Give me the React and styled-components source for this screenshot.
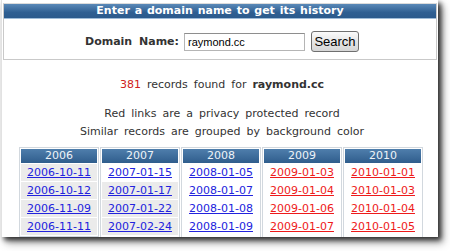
import React from "react";
import styled, { createGlobalStyle } from "styled-components";

const GlobalStyle = createGlobalStyle`
  html, body { margin: 0; padding: 0; background: #ffffff; }
  body { font-family: "DejaVu Sans", Verdana, sans-serif; font-size: 11px; color: #333; }
`;

const Frame = styled.div`
  width: 450px;
  height: 251px;
  overflow: hidden;
  background: #fff;
`;

const Page = styled.div`
  box-sizing: border-box;
  margin-left: 1px;
  width: 437px;
  height: 237px;
  padding: 3px 1px 0 1px;
  border-left: 1px solid #e2e2e2;
  background: #fff;
  overflow: hidden;
  box-shadow: 3px 3px 5px rgba(0, 0, 0, 0.75), 5px 6px 8px rgba(0, 0, 0, 0.35);
  display: flex;
  flex-direction: column;
  align-items: stretch;
`;

const FormBox = styled.div`
  border: 1px solid #c9c9c9;
  border-top-color: #dcdcdc;
`;

const FormHeader = styled.div`
  height: 14px;
  line-height: 14px;
  text-align: center;
  color: #fff;
  font-weight: bold;
  font-size: 11px;
  word-spacing: 1px;
  background: linear-gradient(#5a89b8, #2f5f92 60%, #2b5a8c);
  border-bottom: 1px solid #9fbcd8;
`;

const FormRow = styled.div`
  display: flex;
  justify-content: center;
  align-items: center;
  padding: 12px 0 7px 4px;
  gap: 5px;
`;

const Label = styled.span`
  font-weight: bold;
  word-spacing: 3px;
  color: #333;
`;

const Input = styled.input`
  box-sizing: border-box;
  width: 121px;
  height: 18px;
  border: 1px solid #b5b5b5;
  border-top-color: #8e8e8e;
  padding: 0 3px;
  font-family: "Liberation Sans", Arial, sans-serif;
  font-size: 11px;
  color: #000;
  outline: none;
`;

const Button = styled.button`
  box-sizing: border-box;
  margin-left: 1px;
  width: 48px;
  height: 21px;
  padding: 0;
  border: 1px solid #6f6f6f;
  border-radius: 3px;
  background: linear-gradient(#fbfbfb, #e6e6e6 50%, #d6d6d6);
  font-family: "Liberation Sans", Arial, sans-serif;
  font-size: 13px;
  color: #000;
`;

const Info = styled.div`
  margin-top: 16px;
  display: flex;
  flex-direction: column;
  align-items: center;
  padding-left: 4px;
  word-spacing: 2.5px;
`;

const Line = styled.div`
  height: 18px;
  line-height: 18px;
  white-space: nowrap;
  margin-top: ${(p) => p.$gap || 0}px;
`;

const Count = styled.span`
  color: #d02020;
`;

const Strong = styled.b`
  color: #333;
`;

const Table = styled.div`
  margin-top: 6px;
  display: flex;
  justify-content: center;
  gap: 1px;
  padding-left: 2px;
`;

const Column = styled.div`
  box-sizing: border-box;
  width: 80px;
  border: 1px solid #d2d8de;
  padding: 1px;
  display: flex;
  flex-direction: column;
  gap: 1px;
  background: #fff;
  align-self: flex-start;
`;

const YearHead = styled.div`
  height: 14px;
  line-height: 14px;
  text-align: center;
  color: #eef3f8;
  background: linear-gradient(#4f7eac, #2f5d8c);
`;

const Cell = styled.div`
  height: 17px;
  line-height: 17px;
  text-align: center;
  background: ${(p) => (p.$shade ? "#ebebeb" : "#ffffff")};
`;

const DateLink = styled.a`
  color: ${(p) => (p.$private ? "#ee1a1a" : "#2222dd")};
  text-decoration: underline;
`;

const columns = [
  {
    year: "2006",
    red: false,
    more: false,
    rows: [
      ["2006-10-11", true],
      ["2006-10-12", true],
      ["2006-11-09", true],
      ["2006-11-11", true],
    ],
  },
  {
    year: "2007",
    red: false,
    more: true,
    rows: [
      ["2007-01-15", false],
      ["2007-01-17", true],
      ["2007-01-22", true],
      ["2007-02-24", true],
    ],
  },
  {
    year: "2008",
    red: false,
    more: true,
    rows: [
      ["2008-01-05", false],
      ["2008-01-07", false],
      ["2008-01-08", false],
      ["2008-01-09", false],
    ],
  },
  {
    year: "2009",
    red: true,
    more: true,
    rows: [
      ["2009-01-03", false],
      ["2009-01-04", false],
      ["2009-01-06", false],
      ["2009-01-07", false],
    ],
  },
  {
    year: "2010",
    red: true,
    more: true,
    rows: [
      ["2010-01-01", false],
      ["2010-01-03", false],
      ["2010-01-04", false],
      ["2010-01-05", false],
    ],
  },
];

export default function App() {
  return (
    <Frame>
      <GlobalStyle />
      <Page>
        <FormBox>
          <FormHeader>Enter a domain name to get its history</FormHeader>
          <FormRow>
            <Label>Domain Name:</Label>
            <Input defaultValue="raymond.cc" />
            <Button>Search</Button>
          </FormRow>
        </FormBox>
        <Info>
          <Line>
            <Count>381</Count> records found for <Strong>raymond.cc</Strong>
          </Line>
          <Line $gap={11}>Red links are a privacy protected record</Line>
          <Line>Similar records are grouped by background color</Line>
        </Info>
        <Table>
          {columns.map((col) => (
            <Column key={col.year}>
              <YearHead>{col.year}</YearHead>
              {col.rows.map(([d, shade]) => (
                <Cell key={d} $shade={shade}>
                  <DateLink href="#" $private={col.red}>
                    {d}
                  </DateLink>
                </Cell>
              ))}
              {col.more && <Cell $shade={false} />}
            </Column>
          ))}
        </Table>
      </Page>
    </Frame>
  );
}
